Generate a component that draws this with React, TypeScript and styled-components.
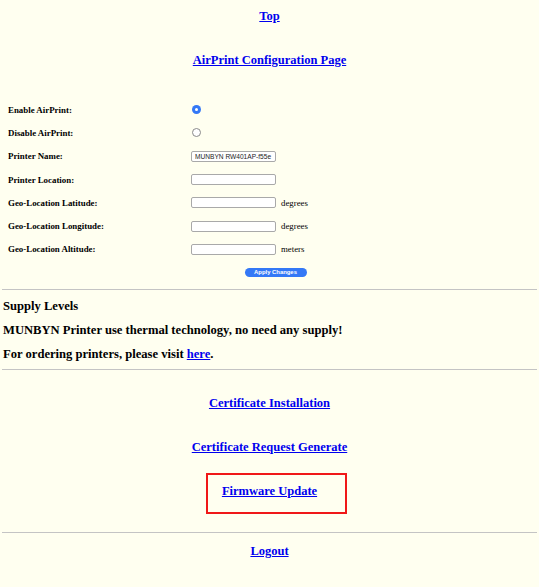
import React from "react";
import styled, { createGlobalStyle } from "styled-components";

const Global = createGlobalStyle`
  html, body { margin: 0; padding: 0; background: #fffff0; }
  body { font-family: "Liberation Serif", "Times New Roman", serif; color: #000; }
`;

const Page = styled.div`
  width: 539px;
  display: flex;
  flex-direction: column;
  background: #fffff0;
`;

const LinkBlock = styled.div<{ $h: number; $mt?: number }>`
  height: ${(p) => p.$h}px;
  margin-top: ${(p) => p.$mt ?? 0}px;
  display: flex;
  align-items: center;
  justify-content: center;
  position: relative;
`;

const BigLink = styled.a`
  font-size: 12.5px;
  font-weight: bold;
  color: #0000ee;
  text-decoration: underline;
  cursor: pointer;
`;

const Form = styled.div`
  margin-top: 26px;
  display: grid;
  grid-template-columns: 183px 1fr;
  grid-auto-rows: 23.3px;
  padding-left: 8px;
  align-items: center;
`;

const Label = styled.div`
  font-size: 8.9px;
  font-weight: bold;
`;

const Cell = styled.div`
  display: flex;
  align-items: center;
  gap: 5px;
`;

const Radio = styled.span<{ $on?: boolean }>`
  width: 9px;
  height: 9px;
  margin-left: 1px;
  border-radius: 50%;
  box-sizing: border-box;
  display: inline-flex;
  align-items: center;
  justify-content: center;
  background: ${(p) => (p.$on ? "#3478f6" : "#ffffff")};
  border: ${(p) => (p.$on ? "none" : "1px solid #8a8a8a")};
  &::after {
    content: "";
    width: 3px;
    height: 3px;
    border-radius: 50%;
    background: #fff;
    display: ${(p) => (p.$on ? "block" : "none")};
  }
`;

const TextBox = styled.input`
  width: 85px;
  height: 11px;
  box-sizing: border-box;
  border: 1px solid #a9a9a9;
  border-radius: 2px;
  background: #fff;
  padding: 0 3px;
  margin: 0;
  font-family: "Liberation Sans", Arial, sans-serif;
  font-size: 6.6px;
  color: #222;
  outline: none;
`;

const Unit = styled.span`
  font-size: 8.8px;
`;

const ButtonRow = styled.div`
  grid-column: 1 / span 2;
  display: flex;
  justify-content: center;
  margin-left: -8px;
  padding-left: 12px;
`;

const Apply = styled.button`
  width: 62px;
  height: 9px;
  border: none;
  border-radius: 5px;
  background: #3478f6;
  color: #fff;
  font-family: "Liberation Sans", Arial, sans-serif;
  font-size: 5.9px;
  font-weight: bold;
  padding: 0;
  line-height: 9px;
`;

const Rule = styled.hr`
  margin: 0 2px;
  border: none;
  border-top: 1px solid #c4c4c4;
  height: 0;
`;

const Supply = styled.div`
  padding: 4px 3px 3px;
  display: flex;
  flex-direction: column;
`;

const SupplyLine = styled.div`
  height: 24px;
  line-height: 24px;
  font-size: 12.6px;
  font-weight: bold;
  a {
    color: #0000ee;
    text-decoration: underline;
  }
`;

const Highlight = styled.div`
  position: absolute;
  left: 206px;
  top: 4px;
  width: 141px;
  height: 41px;
  box-sizing: border-box;
  border: 2px solid #f01818;
  pointer-events: none;
`;

export default function App() {
  const fields = [
    { label: "Geo-Location Latitude:", unit: "degrees" },
    { label: "Geo-Location Longitude:", unit: "degrees" },
    { label: "Geo-Location Altitude:", unit: "meters" },
  ];
  return (
    <Page>
      <Global />
      <LinkBlock $h={32}>
        <BigLink>Top</BigLink>
      </LinkBlock>
      <LinkBlock $h={24} $mt={16}>
        <BigLink>AirPrint Configuration Page</BigLink>
      </LinkBlock>
      <Form>
        <Label>Enable AirPrint:</Label>
        <Cell>
          <Radio $on />
        </Cell>
        <Label>Disable AirPrint:</Label>
        <Cell>
          <Radio />
        </Cell>
        <Label>Printer Name:</Label>
        <Cell>
          <TextBox defaultValue="MUNBYN RW401AP-f55e" />
        </Cell>
        <Label>Printer Location:</Label>
        <Cell>
          <TextBox defaultValue="" />
        </Cell>
        {fields.map((f) => (
          <React.Fragment key={f.label}>
            <Label>{f.label}</Label>
            <Cell>
              <TextBox defaultValue="" />
              <Unit>{f.unit}</Unit>
            </Cell>
          </React.Fragment>
        ))}
        <ButtonRow>
          <Apply>Apply Changes</Apply>
        </ButtonRow>
      </Form>
      <LinkBlock $h={5} />
      <Rule />
      <Supply>
        <SupplyLine>Supply Levels</SupplyLine>
        <SupplyLine>MUNBYN Printer use thermal technology, no need any supply!</SupplyLine>
        <SupplyLine>
          For ordering printers, please visit <a>here</a>.
        </SupplyLine>
      </Supply>
      <Rule />
      <LinkBlock $h={44} $mt={11}>
        <BigLink>Certificate Installation</BigLink>
      </LinkBlock>
      <LinkBlock $h={44}>
        <BigLink>Certificate Request Generate</BigLink>
      </LinkBlock>
      <LinkBlock $h={44}>
        <BigLink>Firmware Update</BigLink>
        <Highlight />
      </LinkBlock>
      <LinkBlock $h={19} />
      <Rule />
      <LinkBlock $h={36}>
        <BigLink>Logout</BigLink>
      </LinkBlock>
    </Page>
  );
}
